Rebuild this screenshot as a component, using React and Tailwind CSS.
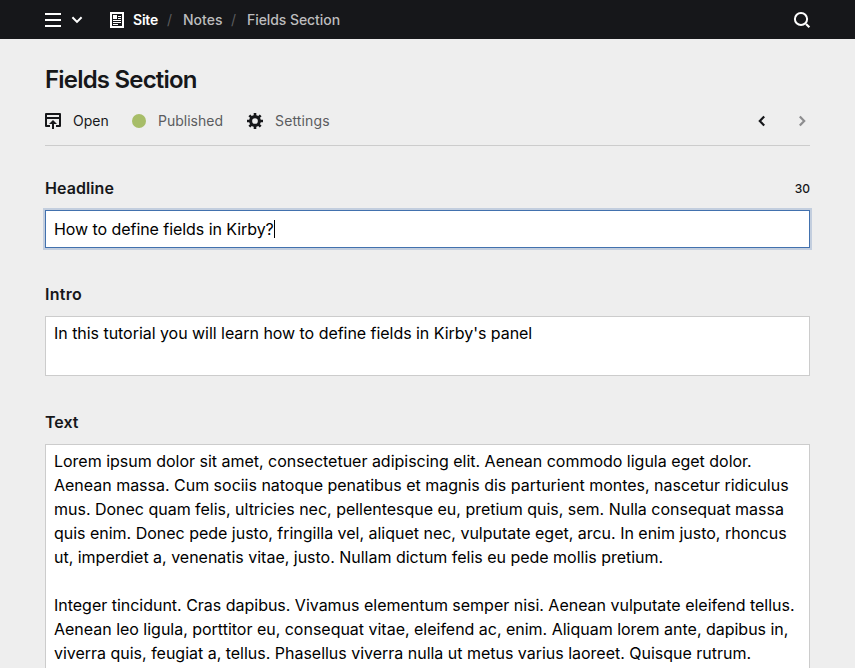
const MenuIcon = () => (
  <svg width="16" height="16" viewBox="0 0 16 16" fill="currentColor">
    <path d="M0 1h16v2H0zM0 7h16v2H0zM0 13h16v2H0z" />
  </svg>
);

const ChevronDown = () => (
  <svg width="12" height="8" viewBox="0 0 12 8" fill="none" stroke="currentColor" strokeWidth="2">
    <path d="M1.4 1.3 6 5.9l4.6-4.6" />
  </svg>
);

const PageIcon = () => (
  <svg width="14" height="16" viewBox="0 0 14 16" fill="currentColor" shapeRendering="crispEdges">
    <path fillRule="evenodd" d="M0 0h14v16H0zM2 2v12h10V2z" />
    <path d="M3 3h4v4H3zM8 4h3v1H8zM8 6h3v1H8zM3 8h8v1H3zM3 10h8v1H3zM3 12h5v1H3z" />
  </svg>
);

const SearchIcon = () => (
  <svg width="18" height="18" viewBox="0 0 18 18" fill="none" stroke="currentColor" strokeWidth="2">
    <circle cx="8" cy="8" r="6.1" />
    <path d="M13 13l3.4 3.3" strokeWidth="2.2" />
  </svg>
);

const OpenIcon = () => (
  <svg width="16" height="16" viewBox="0 0 16 16" fill="currentColor">
    <path d="M15 0H1a1 1 0 0 0-1 1v12a1 1 0 0 0 1 1h4v-2H2V6h12v6h-3v2h4a1 1 0 0 0 1-1V1a1 1 0 0 0-1-1zM2 4V2h12v2z" />
    <path d="M12 11 8 7l-4 4h3v5h2v-5z" />
  </svg>
);

const GearIcon = () => (
  <svg width="16" height="16" viewBox="0 0 16 16" fill="none" stroke="currentColor">
    <circle cx="8" cy="8" r="4.4" strokeWidth="3.1" />
    <path
      strokeWidth="2.6"
      d="M8 0v3M8 13v3M0 8h3M13 8h3M2.35 2.35l2 2M11.65 11.65l2 2M2.35 13.65l2-2M11.65 4.35l2-2"
    />
  </svg>
);

const Angle = ({ flip }) => (
  <svg
    width="8"
    height="12"
    viewBox="0 0 8 12"
    fill="none"
    stroke="currentColor"
    strokeWidth="2.2"
    className={flip ? "rotate-180" : ""}
  >
    <path d="M6.2 1.4 1.8 6l4.4 4.6" />
  </svg>
);

const lines = [
  "Lorem ipsum dolor sit amet, consectetuer adipiscing elit. Aenean commodo ligula eget dolor.",
  "Aenean massa. Cum sociis natoque penatibus et magnis dis parturient montes, nascetur ridiculus",
  "mus. Donec quam felis, ultricies nec, pellentesque eu, pretium quis, sem. Nulla consequat massa",
  "quis enim. Donec pede justo, fringilla vel, aliquet nec, vulputate eget, arcu. In enim justo, rhoncus",
  "ut, imperdiet a, venenatis vitae, justo. Nullam dictum felis eu pede mollis pretium.",
  "",
  "Integer tincidunt. Cras dapibus. Vivamus elementum semper nisi. Aenean vulputate eleifend tellus.",
  "Aenean leo ligula, porttitor eu, consequat vitae, eleifend ac, enim. Aliquam lorem ante, dapibus in,",
  "viverra quis, feugiat a, tellus. Phasellus viverra nulla ut metus varius laoreet. Quisque rutrum.",
];

export default function App() {
  return (
    <div className="flex h-[668px] w-[855px] flex-col overflow-hidden bg-[#eeeeee] font-[Inter,sans-serif] text-[#16171a]">
      <header className="flex h-[39px] shrink-0 items-center bg-[#16171a] pr-[44px] pb-px pl-[45px] text-sm font-medium text-white">
        <span className="mt-0.5"><MenuIcon /></span>
        <span className="mt-0.5 ml-[10px]"><ChevronDown /></span>
        <span className="mt-0.5 ml-[27px]"><PageIcon /></span>
        <span className="mt-0.5 ml-[9px] w-[34px] font-semibold tracking-[-0.2px]">Site</span>
        <span className="mt-0.5 w-4 font-normal text-[#5c5d5f]">/</span>
        <span className="mt-0.5 w-[48px] text-[#bdbdbe]">Notes</span>
        <span className="mt-0.5 w-4 font-normal text-[#5c5d5f]">/</span>
        <span className="mt-0.5 tracking-[-0.07px] text-[#bdbdbe]">Fields Section</span>
        <span className="mt-0.5 ml-auto"><SearchIcon /></span>
      </header>

      <main className="flex flex-col px-[45px] pt-[25px]">
        <h1 className="text-2xl font-semibold tracking-[-0.8px]">Fields Section</h1>
        <div className="mt-px flex h-[49px] items-center border-b border-[#cccccc] text-sm">
          <OpenIcon />
          <span className="ml-3 w-[59px]">Open</span>
          <span className="size-3.5 rounded-full bg-[#a7bd68]" />
          <span className="ml-3 w-[89px] text-[#5b5c5e]">Published</span>
          <GearIcon />
          <span className="ml-3 tracking-[0.15px] text-[#5b5c5e]">Settings</span>
          <span className="ml-auto"><Angle /></span>
          <span className="mr-1 ml-8 text-[#8d8d8f]"><Angle flip /></span>
        </div>

        <div className="mt-[30px] flex h-6 items-center justify-between">
          <label className="text-base font-semibold tracking-[0.08px]">Headline</label>
          <span className="pt-0.5 text-xs font-medium">30</span>
        </div>
        <div className="mt-[10px] flex h-[38px] items-center border border-[#4271ae] bg-white px-2 text-base tracking-[-0.06px] text-black shadow-[0_0_0_2px_rgba(66,113,174,0.25)]">
          How to define fields in Kirby?
          <span className="h-[18px] w-px bg-black" />
        </div>

        <label className="mt-[34px] h-6 text-base font-semibold tracking-[0.3px]">Intro</label>
        <div className="mt-[10px] h-[60px] border border-[#cccccc] bg-white px-2 pt-1 text-base tracking-[-0.04px] text-black">
          In this tutorial you will learn how to define fields in Kirby's panel
        </div>

        <label className="mt-[34px] h-6 text-base font-semibold">Text</label>
        <div className="mt-[10px] h-[300px] border border-[#cccccc] bg-white px-2 pt-1 text-base tracking-[-0.015px] text-black">
          {lines.map((text, i) => (
            <p key={i} className="h-6 whitespace-nowrap">{text}</p>
          ))}
        </div>
      </main>
    </div>
  );
}
